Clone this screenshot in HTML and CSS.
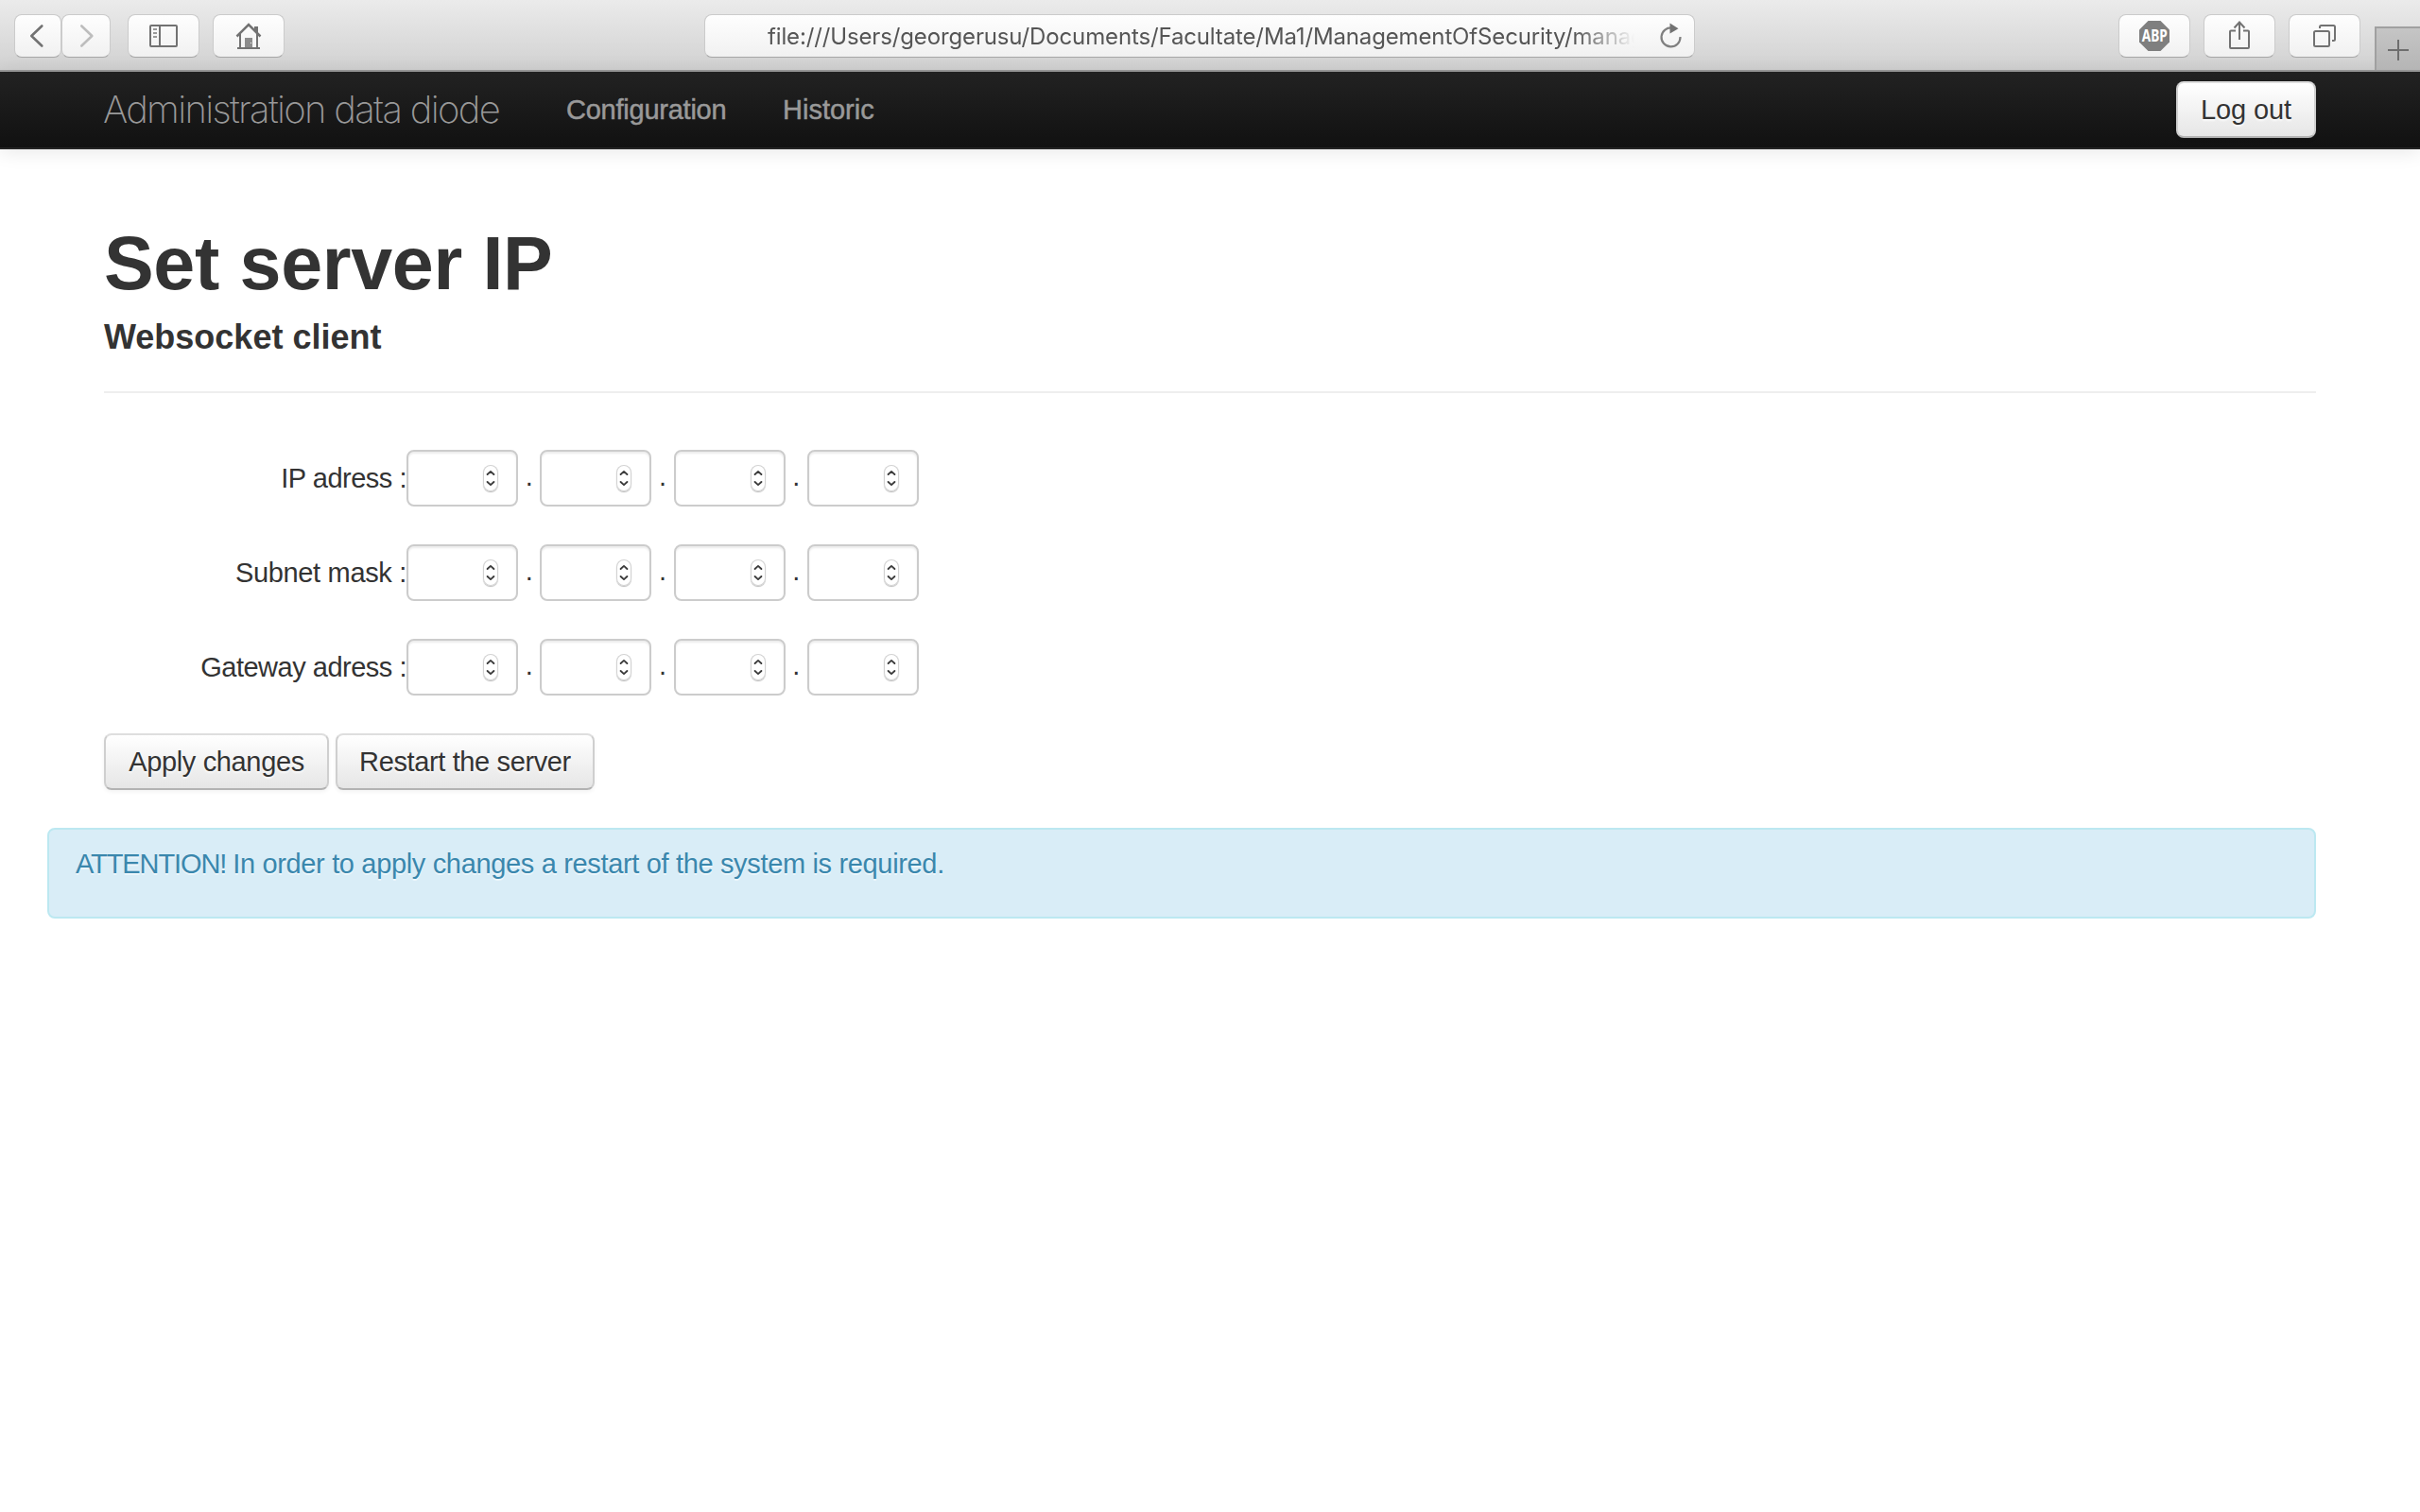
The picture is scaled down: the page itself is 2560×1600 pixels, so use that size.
FILE: index.html
```html
<!DOCTYPE html>
<html lang="en">
<head>
<meta charset="utf-8">
<title>Administration data diode</title>
<link rel="stylesheet" href="styles.css">
</head>
<body>
<svg class="defs" width="0" height="0" aria-hidden="true">
  <symbol id="stepper" viewBox="0 0 16 28">
    <path d="M4.6 10 8 6.9 11.4 10M4.6 18 8 21.1 11.4 18" fill="none" stroke="#3c3c3c" stroke-width="1.9" stroke-linecap="round" stroke-linejoin="round"/>
  </symbol>
</svg>

<header class="toolbar">
  <div class="tool-group history">
    <button class="tool back" aria-label="Back"><svg width="46" height="44" viewBox="0 0 46 44"><path d="M27.300 11.500 16.300 22 27.300 32.500" fill="none" stroke="#727272" stroke-width="2.6" stroke-linecap="round" stroke-linejoin="round"/></svg></button>
    <button class="tool forward" aria-label="Forward"><svg width="49" height="44" viewBox="0 0 49 44"><path d="M19.300 11.500 30.300 22 19.300 32.500" fill="none" stroke="#bdbdbd" stroke-width="2.6" stroke-linecap="round" stroke-linejoin="round"/></svg></button>
  </div>
  <button class="tool sidebar" aria-label="Sidebar"><svg width="74" height="44" viewBox="0 0 74 44"><g fill="none" stroke="#727272" stroke-width="2"><rect x="23" y="11" width="28" height="22" rx="1"/><path d="M33 11v22"/></g><path d="M26 15h4M26 19h4M26 23h4" stroke="#999" stroke-width="2"/></svg></button>
  <button class="tool home" aria-label="Home"><svg width="74" height="44" viewBox="0 0 74 44"><path d="M24.500 22.500 37 10 49.500 22.500" fill="none" stroke="#727272" stroke-width="2.500"/><path d="M43 12h4v8l-4-4z" fill="#727272"/><path d="M28 20v14M46 20v14M25 35h24" stroke="#727272" stroke-width="2" fill="none"/><path d="M33 24h8v10h-8z" fill="#8c8c8c"/><path d="M39 29h1v1h-1z" fill="#fff"/></svg></button>

  <div class="address">
    <span class="url">file:///Users/georgerusu/Documents/Facultate/Ma1/ManagementOfSecurity/manag</span>
    <svg width="26" height="30" viewBox="0 0 26 30"><path d="M22.500 16A10 10 0 1 1 14 6.500" fill="none" stroke="#808080" stroke-width="2.200"/><path d="M11.500 1.500 20.500 7.300 11.500 12.500z" fill="#727272"/></svg>
  </div>

  <button class="tool abp" aria-label="AdBlock Plus"><svg width="74" height="44" viewBox="0 0 74 44"><path d="M30.500 6h13L53 15.500v13L43.500 38h-13L21 28.500v-13z" fill="#7f7f7f"/><text x="37.200" y="28" class="abp-text" textLength="27" lengthAdjust="spacingAndGlyphs">ABP</text></svg></button>
  <button class="tool share" aria-label="Share"><svg width="74" height="44" viewBox="0 0 74 44"><path d="M33 16.500h-5a1 1 0 0 0-1 1V34a1 1 0 0 0 1 1h18a1 1 0 0 0 1-1V17.500a1 1 0 0 0-1-1h-5M37 26V8M31.500 13.500 37 7.500l5.500 6" fill="none" stroke="#727272" stroke-width="2"/></svg></button>
  <button class="tool tabs" aria-label="Tabs"><svg width="74" height="44" viewBox="0 0 74 44"><g fill="none" stroke="#727272" stroke-width="2"><rect x="26" y="17" width="16" height="16" rx="1.500"/><path d="M32 14v-1.500a1.500 1.500 0 0 1 1.500-1.500h13a1.500 1.500 0 0 1 1.500 1.500v13a1.500 1.500 0 0 1-1.500 1.500H45"/></g></svg></button>
  <button class="new-tab" aria-label="New tab"><svg width="46" height="44" viewBox="0 0 46 44"><path d="M12 23h22M23 12v22" stroke="#6e6e6e" stroke-width="2"/></svg></button>
</header>

<nav class="navbar">
  <a class="brand">Administration data diode</a>
  <a class="nav-link configuration">Configuration</a>
  <a class="nav-link historic">Historic</a>
  <button class="btn logout">Log out</button>
</nav>

<main class="page">
  <h1>Set server IP</h1>
  <h3>Websocket client</h3>
  <hr>
  <form class="ip-form">
    <div class="row">
      <label>IP adress :</label>
      <div class="octets">
        <span class="octet"><svg class="stepper"><use href="#stepper"/></svg></span><i>.</i>
        <span class="octet"><svg class="stepper"><use href="#stepper"/></svg></span><i>.</i>
        <span class="octet"><svg class="stepper"><use href="#stepper"/></svg></span><i>.</i>
        <span class="octet"><svg class="stepper"><use href="#stepper"/></svg></span>
      </div>
    </div>
    <div class="row">
      <label class="subnet">Subnet mask :</label>
      <div class="octets">
        <span class="octet"><svg class="stepper"><use href="#stepper"/></svg></span><i>.</i>
        <span class="octet"><svg class="stepper"><use href="#stepper"/></svg></span><i>.</i>
        <span class="octet"><svg class="stepper"><use href="#stepper"/></svg></span><i>.</i>
        <span class="octet"><svg class="stepper"><use href="#stepper"/></svg></span>
      </div>
    </div>
    <div class="row">
      <label>Gateway adress :</label>
      <div class="octets">
        <span class="octet"><svg class="stepper"><use href="#stepper"/></svg></span><i>.</i>
        <span class="octet"><svg class="stepper"><use href="#stepper"/></svg></span><i>.</i>
        <span class="octet"><svg class="stepper"><use href="#stepper"/></svg></span><i>.</i>
        <span class="octet"><svg class="stepper"><use href="#stepper"/></svg></span>
      </div>
    </div>
    <div class="actions">
      <button class="btn apply" type="button">Apply changes</button>
      <button class="btn restart" type="button">Restart the server</button>
    </div>
  </form>
  <div class="alert"><span class="alert-lead">ATTENTION! </span>In order to apply changes a restart of the system is required.</div>
</main>
</body>
</html>
```

FILE: styles.css
```css
* { box-sizing: border-box; }
html, body { margin: 0; height: 100%; overflow: hidden; }
body {
  background: #fff;
  color: #333;
  font: 29px/40px "Liberation Sans", Arial, sans-serif;
}
button { font: inherit; color: inherit; margin: 0; }
svg { display: block; flex: none; }
.defs { position: absolute; }

/* Browser toolbar */
.toolbar {
  display: flex;
  align-items: flex-start;
  height: 76px;
  padding: 15px 0 0 15px;
  border-bottom: 2px solid #9b9b9b;
  background: linear-gradient(#ebebeb, #d1d1d1);
}
.tool, .address {
  display: flex;
  align-items: center;
  justify-content: center;
  height: 46px;
  padding: 0;
  border: 1px solid #cbcbcb;
  border-bottom-color: #a6a6a6;
  border-radius: 8px;
  background: linear-gradient(#fefefe, #f1f1f1);
}
.tool { width: 76px; flex: none; }
.tool-group { display: flex; }
.back { width: 50px; }
.forward { width: 52px; }
.sidebar { margin-left: 18px; }
.home { margin-left: 14px; }
.address {
  width: 1048px;
  margin-left: 444px;
  padding: 0 11px 0 66px;
  justify-content: space-between;
}
.url {
  width: 918px;
  padding-top: 2px;
  white-space: nowrap;
  color: #555;
  font: 24px/32px Inter, sans-serif;
  letter-spacing: -0.14px;
  -webkit-mask-image: linear-gradient(to right, #000 853px, transparent 917px);
  mask-image: linear-gradient(to right, #000 853px, transparent 917px);
}
.abp { margin-left: 448px; }
.abp-text {
  fill: #fff;
  font: bold 17px "Noto Sans", sans-serif;
  text-anchor: middle;
}
.share, .tabs { margin-left: 14px; }
.new-tab {
  flex: none;
  width: 48px;
  height: 46px;
  margin: 13px 0 0 15px;
  padding: 0;
  border: solid #a0a0a0;
  border-width: 2px 0 0 2px;
  background: linear-gradient(#c5c5c5, #b5b5b5);
}

/* Application navbar */
.navbar {
  display: flex;
  height: 82px;
  padding: 10px 110px 0;
  border-bottom: 2px solid #252525;
  background: linear-gradient(#222, #111);
  box-shadow: 0 2px 20px rgba(0, 0, 0, .1);
  color: #999;
}
.brand {
  width: 490px;
  margin-top: 10px;
  margin-left: -1px;
  font: 200 40px/40px Inter, sans-serif;
  letter-spacing: -1.7px;
  white-space: nowrap;
}
.nav-link {
  margin-top: 10px;
  -webkit-text-stroke: .5px #999;
  white-space: nowrap;
}
.configuration { width: 229px; letter-spacing: -.24px; }

.btn {
  height: 60px;
  padding: 8px 0;
  border: 2px solid #ccc;
  border-color: #dedede #cfcfcf #b3b3b3;
  border-radius: 8px;
  background: linear-gradient(#fff, #e6e6e6);
  box-shadow: 0 2px 4px rgba(0, 0, 0, .05);
  color: #333;
  line-height: 40px;
  text-align: center;
  text-shadow: 0 2px 2px rgba(255, 255, 255, .75);
  white-space: nowrap;
}
.logout { width: 148px; margin-left: auto; letter-spacing: -.1px; }
.apply { width: 238px; letter-spacing: -.35px; }
.restart { width: 274px; letter-spacing: -.37px; }

/* Page content */
.page { padding: 81px 110px 0; }
h1, h3 { margin: 0; font-weight: bold; }
h1 { font-size: 79px; line-height: 80px; letter-spacing: -.33px; }
h3 { font-size: 36px; line-height: 76px; }
hr { height: 2px; margin: 19px 0 60px; border: 0; background: #eee; }
.ip-form { display: flex; flex-direction: column; gap: 40px; }
.row { display: flex; align-items: center; height: 60px; }
label { width: 320px; text-align: right; letter-spacing: -.49px; }
.subnet { letter-spacing: -.33px; }
.octets { display: flex; align-items: center; }
.octets i {
  width: 23.33px;
  padding-bottom: 4px;
  font-style: normal;
  text-align: center;
}
.octet {
  display: flex;
  align-items: center;
  justify-content: flex-end;
  width: 118px;
  height: 60px;
  padding-right: 19px;
  border: 2px solid #ccc;
  border-radius: 8px;
  background: #fff;
  box-shadow: inset 0 2px 2px rgba(0, 0, 0, .075);
}
.stepper {
  width: 16px;
  height: 28px;
  border-radius: 8px;
  box-shadow: inset 0 0 0 1px #d2d2d2, 0 1px 1px #bbb;
}
.actions { display: flex; gap: 7px; }
.alert {
  height: 96px;
  margin: 40px 0 0 -60px;
  padding: 16px 28px;
  border: 2px solid #bce8f1;
  border-radius: 8px;
  background: #d9edf7;
  color: #3a87ad;
  letter-spacing: -.34px;
  text-shadow: 0 2px 0 rgba(255, 255, 255, .5);
}
.alert-lead { letter-spacing: -1.1px; }
```
